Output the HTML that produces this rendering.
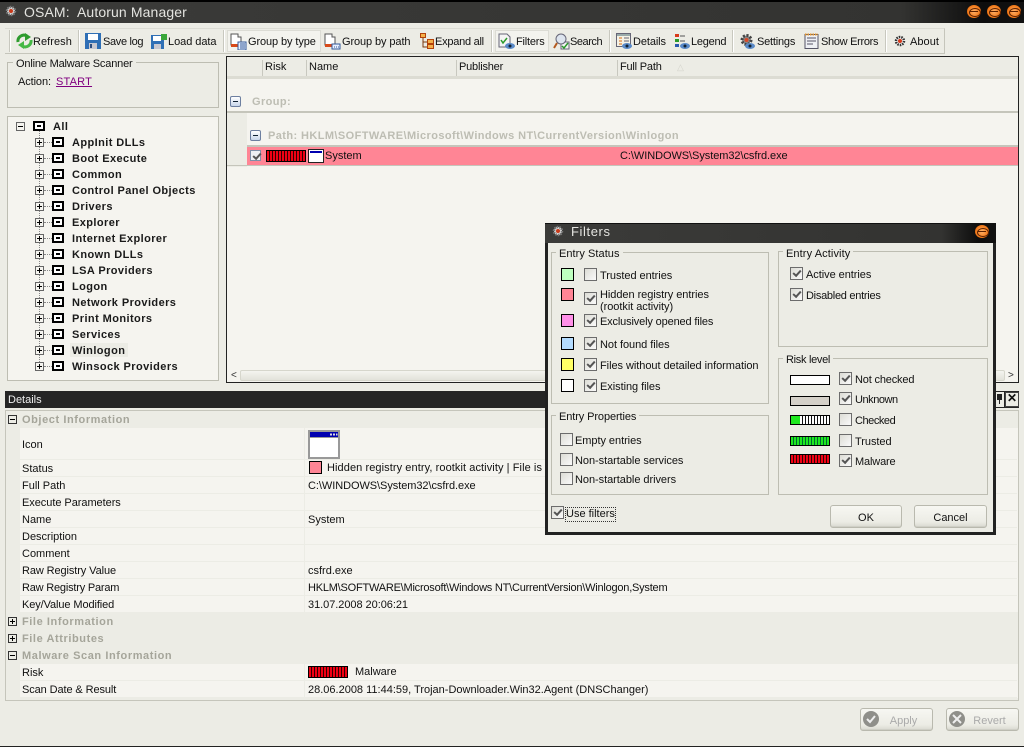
<!DOCTYPE html>
<html><head><meta charset="utf-8"><title>OSAM: Autorun Manager</title>
<style>
html,body{margin:0;padding:0}
body{width:1024px;height:747px;overflow:hidden;position:relative;background:#ecece5;font:11px/13px "Liberation Sans",sans-serif;color:#111}
div,span,svg{position:absolute;box-sizing:border-box}
span{white-space:nowrap;transform:translateY(2px)}
.title{background:linear-gradient(90deg,#3b3b39 0,#333331 88%,#0d0d0d 96%,#111 100%)}
.tb{top:41px;margin-top:-7px;letter-spacing:-.1px}
.sep{top:30px;width:2px;height:22px;border-left:1px solid #c8c8bf;border-right:1px solid #fff}
.gb{border:1px solid #bdbdb2;background:#ecece5}
.lg{background:#ecece5;padding:0 3px;letter-spacing:.05px}
.tr{font-weight:bold;letter-spacing:.42px;color:#1a1a1a}
.ex{width:9px;height:9px;border:1px solid #666;background:#f5f4ef}
.ex:before{content:"";position:absolute;left:1px;top:3px;width:5px;height:1px;background:#000}
.ex.p:after{content:"";position:absolute;left:3px;top:1px;width:1px;height:5px;background:#000}
.ic{width:12px;height:10px;border:2px solid #000;background:#fff;transform:translateY(1px)}
.ic:after{content:"";position:absolute;left:2px;top:2px;width:4px;height:2px;background:#000}
.hl{top:60px;width:1px;height:16px;background:#c8c8bf}
.gx{font-weight:bold;color:#bdbdb3;letter-spacing:.41px}
.row{left:20px;width:997px;height:1px;background:#ecece5}
.sec{color:#a5a59a;font-weight:bold;letter-spacing:.58px;left:22px}
.cb{width:13px;height:13px;border:1px solid #6c6c6c;background:linear-gradient(135deg,#dcdcd5,#fafafa)}
.cb.c:after{content:"";position:absolute;left:2px;top:2px;width:6px;height:3px;border-left:2px solid #555;border-bottom:2px solid #555;transform:rotate(-48deg)}
.sw{width:13px;height:13px;border:1px solid #000}
.bar{width:40px;height:12px;border:1px solid #000}
.rd{background:repeating-linear-gradient(90deg,#f00014 0 2px,#300 2px 3px)}
.gr{background:repeating-linear-gradient(90deg,#1fe81f 0 2px,#063 2px 3px)}
.btn{border:1px solid #b9b9ae;border-radius:3px;background:linear-gradient(#f7f7f2,#ecece5 75%,#d9d9d0);text-align:center;height:23px;line-height:24px;box-shadow:inset 0 -1px 0 #cfcfc6}
.dh{width:9px;height:9px;left:8px;border:1px solid #333;background:#ecece5}
.dh:before{content:"";position:absolute;left:1px;top:3px;width:5px;height:1px;background:#000}
.dh.p:after{content:"";position:absolute;left:3px;top:1px;width:1px;height:5px;background:#000}
.mn{width:11px;height:11px;border:1px solid #6d7fa0;border-radius:2px;background:linear-gradient(#fff,#c8d6ea)}
.mn:before{content:"";position:absolute;left:2px;top:4px;width:5px;height:1px;background:#123}
.cl{width:14px;height:13px;border-radius:50%;background:radial-gradient(circle at 50% 50%,#ffb066 0,#f07818 65%,#c45208 100%)}
.cl:before{content:"";position:absolute;left:2px;top:3px;width:10px;height:7px;border:1px solid #5a2000;border-radius:50%}
.cl:after{content:"";position:absolute;left:3px;top:6px;width:8px;height:1px;background:#5a2000}
</style></head><body>

<!-- main title -->
<div style="left:0;top:0;width:1024px;height:2px;background:#000"></div>
<div class="title" style="left:0;top:2px;width:1024px;height:21px"></div>
<svg style="left:5px;top:5px" width="12" height="12" viewBox="0 0 12 12"><circle cx="6" cy="6" r="4" fill="#ddd" stroke="#777" stroke-width="2.500" stroke-dasharray="1.500 1"/><circle cx="6" cy="6" r="2" fill="#c83a1a"/></svg>
<span style="left:24px;top:2px;font-size:14px;line-height:17px;color:#e4e4e0;letter-spacing:.12px">OSAM:&nbsp; Autorun Manager</span>
<div class="cl" style="left:967px;top:5px"></div>
<div class="cl" style="left:987px;top:5px"></div>
<div class="cl" style="left:1007px;top:5px"></div>

<!-- toolbar -->
<div style="left:5px;top:28px;width:940px;height:26px;border-right:1px solid #c5c5bb;border-top:1px solid #dcdcd4;border-bottom:1px solid #c5c5bb"></div>
<div style="left:9px;top:30px;width:2px;height:22px;border-left:1px solid #c8c8bf;border-right:1px solid #fff"></div>
<div class="sep" style="left:78px"></div>
<div class="sep" style="left:223px"></div>
<div class="sep" style="left:491px"></div>
<div class="sep" style="left:609px"></div>
<div class="sep" style="left:732px"></div>
<div class="sep" style="left:885px"></div>
<div style="left:227px;top:30px;width:94px;height:22px;background:#f3f3ee;border:1px solid #dcdcd5"></div>
<div style="left:495px;top:30px;width:54px;height:22px;background:#f3f3ee;border:1px solid #dcdcd5"></div>

<svg style="left:16px;top:33px" width="17" height="16" viewBox="0 0 17 16"><path d="M2 9a6 6 0 0 1 9-6" fill="none" stroke="#2e9b2e" stroke-width="3"/><path d="M9 0l6 4-6 4z" fill="#2e9b2e"/><path d="M15 7a6 6 0 0 1-9 6" fill="none" stroke="#45b845" stroke-width="3"/><path d="M8 16l-6-4 6-4z" fill="#45b845"/></svg>
<span class="tb" style="left:33px;letter-spacing:.05px">Refresh</span>
<svg style="left:85px;top:33px" width="16" height="16" viewBox="0 0 16 16"><rect width="16" height="16" fill="#2f6fb5"/><rect x="3" y="1" width="10" height="6" fill="#fff"/><rect x="4" y="10" width="8" height="6" fill="#c8c8d0"/><rect x="5" y="11" width="2" height="4" fill="#2f4f80"/></svg>
<span class="tb" style="left:103px;letter-spacing:-.33px">Save log</span>
<svg style="left:151px;top:33px" width="17" height="16" viewBox="0 0 17 16"><rect y="2" width="13" height="14" fill="#2f6fb5"/><rect x="2" y="3" width="8" height="5" fill="#fff"/><rect x="3" y="11" width="7" height="5" fill="#c8c8d0"/><path d="M10 1h6v6h-6z" fill="#3aa63a"/></svg>
<span class="tb" style="left:168px;letter-spacing:-.05px">Load data</span>
<svg style="left:230px;top:33px" width="17" height="17" viewBox="0 0 17 17"><path d="M1 1h7v3h3v8H1z" fill="#fff" stroke="#555"/><rect x="1" y="11" width="7" height="3" fill="#d84a1a"/><rect x="8" y="9" width="8" height="8" fill="#e8f0ff" stroke="#345a9a"/><path d="M10 11h5M10 13h5M10 15h5" stroke="#345a9a"/></svg>
<span class="tb" style="left:248px">Group by type</span>
<svg style="left:324px;top:33px" width="17" height="17" viewBox="0 0 17 17"><path d="M1 1h7v3h3v8H1z" fill="#fff" stroke="#555"/><rect x="1" y="11" width="7" height="3" fill="#d84a1a"/><rect x="8" y="11" width="8" height="5" fill="#e8f0ff" stroke="#345a9a"/><path d="M10 14h1M12 14h1M14 14h1" stroke="#345a9a"/></svg>
<span class="tb" style="left:342px">Group by path</span>
<svg style="left:420px;top:33px" width="14" height="16" viewBox="0 0 14 16"><path d="M3 5v9h4M3 9h4" fill="none" stroke="#7a3a10"/><rect x="0.500" y="0.500" width="5" height="4" fill="#f4b04a" stroke="#b3420a"/><rect x="7.500" y="6.500" width="6" height="4" fill="#f4b04a" stroke="#b3420a"/><rect x="7.500" y="11.500" width="6" height="4" fill="#f4b04a" stroke="#b3420a"/></svg>
<span class="tb" style="left:435px;letter-spacing:-.25px">Expand all</span>
<svg style="left:498px;top:33px" width="18" height="17" viewBox="0 0 18 17"><path d="M1 1h8l3 3v10H1z" fill="#f4f4f4" stroke="#667"/><path d="M3 7l2 3 4-5" fill="none" stroke="#2a9a2a" stroke-width="1.500"/><ellipse cx="12" cy="13" rx="5" ry="3" fill="#5a8ac8"/><circle cx="12" cy="13" r="1.500" fill="#123"/></svg>
<span class="tb" style="left:516px;letter-spacing:-.2px">Filters</span>
<svg style="left:553px;top:33px" width="17" height="17" viewBox="0 0 17 17"><rect x="8" y="9" width="8" height="7" fill="#f4f4f4" stroke="#667"/><circle cx="8" cy="6" r="5" fill="#dde4ee" stroke="#667"/><path d="M4 10l-3 5" stroke="#b45a20" stroke-width="2"/><path d="M9 13l2 2 4-5" fill="none" stroke="#2a9a2a" stroke-width="1.500"/></svg>
<span class="tb" style="left:570px;letter-spacing:-.45px">Search</span>
<svg style="left:616px;top:33px" width="17" height="17" viewBox="0 0 17 17"><rect x="0.500" y="0.500" width="14" height="13" fill="#f5f2e6" stroke="#667"/><rect x="1" y="1" width="13" height="2" fill="#9aa"/><path d="M3 5h3M3 8h3M3 11h3" stroke="#d86a10"/><path d="M8 5h5M8 8h5" stroke="#667"/><ellipse cx="11" cy="13" rx="5" ry="3" fill="#5a8ac8"/><circle cx="11" cy="13" r="1.500" fill="#123"/></svg>
<span class="tb" style="left:633px">Details</span>
<svg style="left:675px;top:33px" width="16" height="17" viewBox="0 0 16 17"><rect x="0" y="1" width="4" height="3" fill="#d83a1a"/><rect x="0" y="6" width="4" height="3" fill="#2a9a2a"/><rect x="0" y="11" width="4" height="3" fill="#2a5ab0"/><path d="M5 3h5M5 8h5" stroke="#555"/><ellipse cx="10" cy="13" rx="5" ry="3" fill="#5a8ac8"/><circle cx="10" cy="13" r="1.500" fill="#123"/></svg>
<span class="tb" style="left:691px;letter-spacing:-.25px">Legend</span>
<svg style="left:739px;top:33px" width="17" height="17" viewBox="0 0 17 17"><circle cx="7.500" cy="7" r="4.500" fill="#888" stroke="#444" stroke-width="3" stroke-dasharray="2 1.500"/><circle cx="7.500" cy="7" r="2" fill="#d84a2a"/><ellipse cx="11" cy="13" rx="5" ry="3" fill="#5a8ac8"/><circle cx="11" cy="13" r="1.500" fill="#123"/></svg>
<span class="tb" style="left:757px;letter-spacing:-.2px">Settings</span>
<svg style="left:804px;top:33px" width="15" height="16" viewBox="0 0 15 16"><rect x="1" y="1.500" width="13" height="14" fill="#eef0f4" stroke="#556"/><path d="M1 1.500h13" stroke="#e8962a" stroke-width="2" stroke-dasharray="1.500 1"/><path d="M3 5h9M3 8h9M3 11h6" stroke="#556"/></svg>
<span class="tb" style="left:821px;letter-spacing:-.3px">Show Errors</span>
<svg style="left:894px;top:35px" width="12" height="12" viewBox="0 0 12 12"><circle cx="6" cy="6" r="4" fill="#eee" stroke="#333" stroke-width="2.500" stroke-dasharray="1.500 1"/><circle cx="6" cy="6" r="2" fill="#d83a1a"/></svg>
<span class="tb" style="left:910px;letter-spacing:.05px">About</span>

<!-- scanner box -->
<div class="gb" style="left:7px;top:62px;width:212px;height:46px"></div>
<span class="lg" style="left:13px;top:56px;letter-spacing:-.18px">Online Malware Scanner</span>
<span style="left:18px;top:74px;letter-spacing:-.1px">Action:</span>
<span style="left:56px;top:74px;color:#800080;text-decoration:underline;letter-spacing:.2px">START</span>

<!-- tree -->
<div class="gb" style="left:7px;top:116px;width:212px;height:265px;background:#f5f4ef"></div>
<div style="left:39px;top:131px;width:1px;height:235px;border-left:1px dotted #888"></div>
<div class="ex" style="left:16px;top:122px"></div><div class="ic" style="left:33px;top:120px"></div><span class="tr" style="left:53px;top:119px">All</span>

<div style="left:44px;top:142px;width:8px;border-top:1px dotted #888"></div><div class="ex p" style="left:35px;top:138px"></div><div class="ic" style="left:52px;top:136px"></div><span class="tr" style="left:72px;top:135px">AppInit DLLs</span>
<div style="left:44px;top:158px;width:8px;border-top:1px dotted #888"></div><div class="ex p" style="left:35px;top:154px"></div><div class="ic" style="left:52px;top:152px"></div><span class="tr" style="left:72px;top:151px">Boot Execute</span>
<div style="left:44px;top:174px;width:8px;border-top:1px dotted #888"></div><div class="ex p" style="left:35px;top:170px"></div><div class="ic" style="left:52px;top:168px"></div><span class="tr" style="left:72px;top:167px">Common</span>
<div style="left:44px;top:190px;width:8px;border-top:1px dotted #888"></div><div class="ex p" style="left:35px;top:186px"></div><div class="ic" style="left:52px;top:184px"></div><span class="tr" style="left:72px;top:183px">Control Panel Objects</span>
<div style="left:44px;top:206px;width:8px;border-top:1px dotted #888"></div><div class="ex p" style="left:35px;top:202px"></div><div class="ic" style="left:52px;top:200px"></div><span class="tr" style="left:72px;top:199px">Drivers</span>
<div style="left:44px;top:222px;width:8px;border-top:1px dotted #888"></div><div class="ex p" style="left:35px;top:218px"></div><div class="ic" style="left:52px;top:216px"></div><span class="tr" style="left:72px;top:215px">Explorer</span>
<div style="left:44px;top:238px;width:8px;border-top:1px dotted #888"></div><div class="ex p" style="left:35px;top:234px"></div><div class="ic" style="left:52px;top:232px"></div><span class="tr" style="left:72px;top:231px">Internet Explorer</span>
<div style="left:44px;top:254px;width:8px;border-top:1px dotted #888"></div><div class="ex p" style="left:35px;top:250px"></div><div class="ic" style="left:52px;top:248px"></div><span class="tr" style="left:72px;top:247px">Known DLLs</span>
<div style="left:44px;top:270px;width:8px;border-top:1px dotted #888"></div><div class="ex p" style="left:35px;top:266px"></div><div class="ic" style="left:52px;top:264px"></div><span class="tr" style="left:72px;top:263px">LSA Providers</span>
<div style="left:44px;top:286px;width:8px;border-top:1px dotted #888"></div><div class="ex p" style="left:35px;top:282px"></div><div class="ic" style="left:52px;top:280px"></div><span class="tr" style="left:72px;top:279px">Logon</span>
<div style="left:44px;top:302px;width:8px;border-top:1px dotted #888"></div><div class="ex p" style="left:35px;top:298px"></div><div class="ic" style="left:52px;top:296px"></div><span class="tr" style="left:72px;top:295px">Network Providers</span>
<div style="left:44px;top:318px;width:8px;border-top:1px dotted #888"></div><div class="ex p" style="left:35px;top:314px"></div><div class="ic" style="left:52px;top:312px"></div><span class="tr" style="left:72px;top:311px">Print Monitors</span>
<div style="left:44px;top:334px;width:8px;border-top:1px dotted #888"></div><div class="ex p" style="left:35px;top:330px"></div><div class="ic" style="left:52px;top:328px"></div><span class="tr" style="left:72px;top:327px">Services</span>
<div style="left:44px;top:350px;width:8px;border-top:1px dotted #888"></div><div class="ex p" style="left:35px;top:346px"></div><div class="ic" style="left:52px;top:344px"></div><div style="left:70px;top:343px;width:58px;height:14px;background:#ecece5"></div><span class="tr" style="left:72px;top:343px">Winlogon</span>
<div style="left:44px;top:366px;width:8px;border-top:1px dotted #888"></div><div class="ex p" style="left:35px;top:362px"></div><div class="ic" style="left:52px;top:360px"></div><span class="tr" style="left:72px;top:359px">Winsock Providers</span>

<!-- list view -->
<div style="left:226px;top:56px;width:793px;height:327px;background:#f5f4ef;border:1px solid #222"></div>
<div style="left:227px;top:57px;width:791px;height:20px;background:#ecece5"></div>
<div style="left:227px;top:76px;width:791px;height:3px;background:#dcdcd3"></div>
<div class="hl" style="left:262px"></div>
<div class="hl" style="left:306px"></div>
<div class="hl" style="left:456px"></div>
<div class="hl" style="left:617px"></div>
<span style="left:265px;top:59px">Risk</span>
<span style="left:309px;top:59px">Name</span>
<span style="left:459px;top:59px;letter-spacing:-.2px">Publisher</span>
<span style="left:620px;top:59px;letter-spacing:-.2px">Full Path</span>
<span style="left:677px;top:59px;color:#d4d4cc;font-size:9px">&#9651;</span>
<div class="mn" style="left:230px;top:96px"></div>
<span class="gx" style="left:252px;top:94px">Group:</span>
<div style="left:227px;top:111px;width:791px;height:2px;background:#c5c5bb"></div>
<div style="left:227px;top:113px;width:20px;height:54px;background:#ecece5"></div>
<div class="mn" style="left:250px;top:130px"></div>
<span class="gx" style="left:268px;top:128px">Path: HKLM\SOFTWARE\Microsoft\Windows NT\CurrentVersion\Winlogon</span>
<div style="left:247px;top:145px;width:771px;height:2px;background:#c5c5bb"></div>
<div style="left:247px;top:147px;width:771px;height:18px;background:#ff8595"></div>
<div style="left:227px;top:165px;width:791px;height:1px;background:#c5c5bb"></div>
<div class="cb c" style="left:250px;top:150px;width:11px;height:11px;border-color:#7f8fa8;background:#eef0f4"></div>
<div class="bar rd" style="left:266px;top:150px"></div>
<svg style="left:308px;top:149px" width="16" height="14" viewBox="0 0 16 14"><rect x="0.500" y="0.500" width="15" height="13" fill="#fff" stroke="#222"/><rect x="2" y="2" width="12" height="2" fill="#0000b0"/></svg>
<span style="left:325px;top:148px">System</span>
<span style="left:620px;top:148px;letter-spacing:-.06px">C:\WINDOWS\System32\csfrd.exe</span>
<!-- scrollbar -->
<div style="left:227px;top:369px;width:791px;height:13px;background:#f5f4ef"></div>
<div style="left:240px;top:370px;width:765px;height:11px;background:linear-gradient(#f4f4ef,#e2e2da);border:1px solid #d6d6cc;border-radius:2px"></div>
<span style="left:231px;top:367px;font-size:10px;color:#333">&lt;</span>
<span style="left:1008px;top:367px;font-size:10px;color:#333">&gt;</span>

<!-- details header -->
<div style="left:5px;top:391px;width:1014px;height:17px;background:#252525"></div>
<span style="left:8px;top:392px;color:#eee">Details</span>
<div style="left:1005px;top:392px;width:14px;height:15px;background:#ecece5;border:1px solid #444"></div>
<span style="left:1007px;top:390px;font-weight:bold;color:#111;font-size:12px">&#10005;</span>
<div style="left:995px;top:392px;width:9px;height:15px;background:#ecece5"></div>
<div style="left:997px;top:394px;width:5px;height:6px;background:#222"></div>
<div style="left:999px;top:400px;width:1px;height:4px;background:#222"></div>

<!-- details grid -->
<div style="left:5px;top:410px;width:1014px;height:291px;border:1px solid #c5c5bb;background:#ecece5"></div>
<div style="left:20px;top:428px;width:998px;height:184px;background:#f5f4ef"></div>
<div style="left:20px;top:664px;width:998px;height:34px;background:#f5f4ef"></div>
<div style="left:304px;top:428px;width:1px;height:184px;background:#ecece5"></div>
<div style="left:304px;top:664px;width:1px;height:34px;background:#ecece5"></div>
<div class="row" style="top:459px"></div>
<div class="row" style="top:476px"></div>
<div class="row" style="top:493px"></div>
<div class="row" style="top:510px"></div>
<div class="row" style="top:527px"></div>
<div class="row" style="top:544px"></div>
<div class="row" style="top:561px"></div>
<div class="row" style="top:578px"></div>
<div class="row" style="top:595px"></div>
<div class="row" style="top:680px"></div>
<div class="row" style="top:697px"></div>

<div class="dh" style="top:415px"></div><span class="sec" style="top:412px">Object Information</span>
<span style="left:22px;top:437px">Icon</span>
<svg style="left:308px;top:430px" width="32" height="29" viewBox="0 0 32 29"><rect x="0.500" y="0.500" width="31" height="28" fill="#fff" stroke="#222"/><rect x="1" y="1" width="30" height="27" fill="none" stroke="#999" stroke-width="2"/><rect x="2" y="2" width="28" height="5" fill="#0000b0"/><path d="M22 4.500h2M25 4.500h2M28 4.500h1.500" stroke="#ddd" stroke-width="2"/><rect x="2" y="7" width="28" height="1" fill="#999"/></svg>
<span style="left:22px;top:461px">Status</span>
<div class="sw" style="left:309px;top:461px;background:#ff8595"></div>
<span style="left:327px;top:460px;letter-spacing:.08px">Hidden registry entry, rootkit activity | File is</span>
<span style="left:22px;top:478px">Full Path</span>
<span style="left:308px;top:478px;letter-spacing:-.06px">C:\WINDOWS\System32\csfrd.exe</span>
<span style="left:22px;top:495px;letter-spacing:-.05px">Execute Parameters</span>
<span style="left:22px;top:512px">Name</span>
<span style="left:308px;top:512px">System</span>
<span style="left:22px;top:529px">Description</span>
<span style="left:22px;top:546px">Comment</span>
<span style="left:22px;top:563px;letter-spacing:-.1px">Raw Registry Value</span>
<span style="left:308px;top:563px">csfrd.exe</span>
<span style="left:22px;top:580px;letter-spacing:-.2px">Raw Registry Param</span>
<span style="left:308px;top:580px;letter-spacing:-.22px">HKLM\SOFTWARE\Microsoft\Windows NT\CurrentVersion\Winlogon,System</span>
<span style="left:22px;top:597px;letter-spacing:-.1px">Key/Value Modified</span>
<span style="left:308px;top:597px;letter-spacing:-.05px">31.07.2008 20:06:21</span>
<div class="dh p" style="top:617px"></div><span class="sec" style="top:614px">File Information</span>
<div class="dh p" style="top:634px"></div><span class="sec" style="top:631px">File Attributes</span>
<div class="dh" style="top:651px"></div><span class="sec" style="top:648px">Malware Scan Information</span>
<span style="left:22px;top:665px">Risk</span>
<div class="bar rd" style="left:308px;top:666px"></div>
<span style="left:355px;top:664px">Malware</span>
<span style="left:22px;top:682px;letter-spacing:-.1px">Scan Date &amp; Result</span>
<span style="left:308px;top:682px">28.06.2008 11:44:59, Trojan-Downloader.Win32.Agent (DNSChanger)</span>

<!-- apply/revert -->
<div class="btn" style="left:860px;top:708px;width:73px;color:#aaa;padding-left:14px">Apply</div>
<div style="left:863px;top:711px;width:16px;height:16px;border-radius:50%;background:#8f8f8a"></div>
<svg style="left:866px;top:714px" width="10" height="10" viewBox="0 0 10 10"><path d="M1 5l3 3 5-6" fill="none" stroke="#eee" stroke-width="2"/></svg>
<div class="btn" style="left:946px;top:708px;width:73px;color:#aaa;padding-left:14px">Revert</div>
<div style="left:949px;top:711px;width:16px;height:16px;border-radius:50%;background:#8f8f8a"></div>
<svg style="left:952px;top:714px" width="10" height="10" viewBox="0 0 10 10"><path d="M1 1l8 8M9 1l-8 8" fill="none" stroke="#eee" stroke-width="2"/></svg>
<div style="left:0;top:746px;width:1024px;height:1px;background:#222"></div>

<!-- dialog -->
<div style="left:545px;top:223px;width:451px;height:312px;background:#ecece5;border:3px solid #222;border-top:0"></div>
<div class="title" style="left:545px;top:223px;width:451px;height:20px;border-top:1px solid #111"></div>
<svg style="left:552px;top:225px" width="12" height="12" viewBox="0 0 12 12"><circle cx="6" cy="6" r="4" fill="#ddd" stroke="#777" stroke-width="2.500" stroke-dasharray="1.500 1"/><circle cx="6" cy="6" r="2" fill="#c83a1a"/></svg>
<span style="left:571px;top:222px;font-size:13px;line-height:16px;color:#e4e4e0;letter-spacing:.6px">Filters</span>
<div class="cl" style="left:975px;top:225px"></div>

<div class="gb" style="left:551px;top:252px;width:218px;height:152px"></div>
<span class="lg" style="left:556px;top:246px">Entry Status</span>
<div class="sw" style="left:561px;top:268px;background:#bfffbf"></div>
<div class="cb" style="left:584px;top:268px"></div>
<span style="left:600px;top:268px;letter-spacing:-.05px">Trusted entries</span>
<div class="sw" style="left:561px;top:288px;background:#ff8595"></div>
<div class="cb c" style="left:584px;top:292px"></div>
<span style="left:600px;top:287px;letter-spacing:-.05px">Hidden registry entries</span>
<span style="left:600px;top:299px;letter-spacing:-.05px">(rootkit activity)</span>
<div class="sw" style="left:561px;top:314px;background:#ff90e8"></div>
<div class="cb c" style="left:584px;top:314px"></div>
<span style="left:600px;top:314px;letter-spacing:-.15px">Exclusively opened files</span>
<div class="sw" style="left:561px;top:337px;background:#b4dcff"></div>
<div class="cb c" style="left:584px;top:337px"></div>
<span style="left:600px;top:337px;letter-spacing:-.05px">Not found files</span>
<div class="sw" style="left:561px;top:358px;background:#ffff66"></div>
<div class="cb c" style="left:584px;top:358px"></div>
<span style="left:600px;top:358px;letter-spacing:-.05px">Files without detailed information</span>
<div class="sw" style="left:561px;top:379px;background:#fff"></div>
<div class="cb c" style="left:584px;top:379px"></div>
<span style="left:600px;top:379px;letter-spacing:-.05px">Existing files</span>

<div class="gb" style="left:551px;top:415px;width:218px;height:80px"></div>
<span class="lg" style="left:556px;top:409px;letter-spacing:-.1px">Entry Properties</span>
<div class="cb" style="left:560px;top:433px"></div>
<span style="left:575px;top:433px;letter-spacing:-.05px">Empty entries</span>
<div class="cb" style="left:560px;top:453px"></div>
<span style="left:575px;top:453px;letter-spacing:-.05px">Non-startable services</span>
<div class="cb" style="left:560px;top:472px"></div>
<span style="left:575px;top:472px;letter-spacing:-.05px">Non-startable drivers</span>

<div class="gb" style="left:778px;top:251px;width:210px;height:96px"></div>
<span class="lg" style="left:783px;top:246px;letter-spacing:.1px">Entry Activity</span>
<div class="cb c" style="left:790px;top:267px"></div>
<span style="left:806px;top:267px;letter-spacing:-.05px">Active entries</span>
<div class="cb c" style="left:790px;top:288px"></div>
<span style="left:806px;top:288px;letter-spacing:-.27px">Disabled entries</span>

<div class="gb" style="left:778px;top:358px;width:210px;height:137px"></div>
<span class="lg" style="left:783px;top:352px;letter-spacing:-.3px">Risk level</span>
<div class="bar" style="left:790px;top:375px;height:10px;background:#fff"></div>
<div class="cb c" style="left:839px;top:372px"></div>
<span style="left:855px;top:372px;letter-spacing:-.17px">Not checked</span>
<div class="bar" style="left:790px;top:396px;height:10px;background:#d4d0c8"></div>
<div class="cb c" style="left:839px;top:392px"></div>
<span style="left:855px;top:392px;letter-spacing:-.45px">Unknown</span>
<div class="bar" style="left:790px;top:415px;height:10px;background:linear-gradient(90deg,#1fe81f 0 9px,transparent 9px),repeating-linear-gradient(90deg,#fff 0 2px,#111 2px 3px)"></div>
<div class="cb" style="left:839px;top:413px"></div>
<span style="left:855px;top:413px;letter-spacing:-.45px">Checked</span>
<div class="bar gr" style="left:790px;top:436px;height:10px"></div>
<div class="cb" style="left:839px;top:434px"></div>
<span style="left:855px;top:434px;letter-spacing:-.05px">Trusted</span>
<div class="bar rd" style="left:790px;top:454px;height:10px"></div>
<div class="cb c" style="left:839px;top:454px"></div>
<span style="left:855px;top:454px;letter-spacing:-.15px">Malware</span>

<div class="cb c" style="left:551px;top:506px"></div>
<span style="left:566px;top:506px;letter-spacing:0;outline:1px dotted #333;outline-offset:0">Use filters</span>
<div class="btn" style="left:830px;top:505px;width:72px">OK</div>
<div class="btn" style="left:914px;top:505px;width:73px">Cancel</div>
</body></html>
